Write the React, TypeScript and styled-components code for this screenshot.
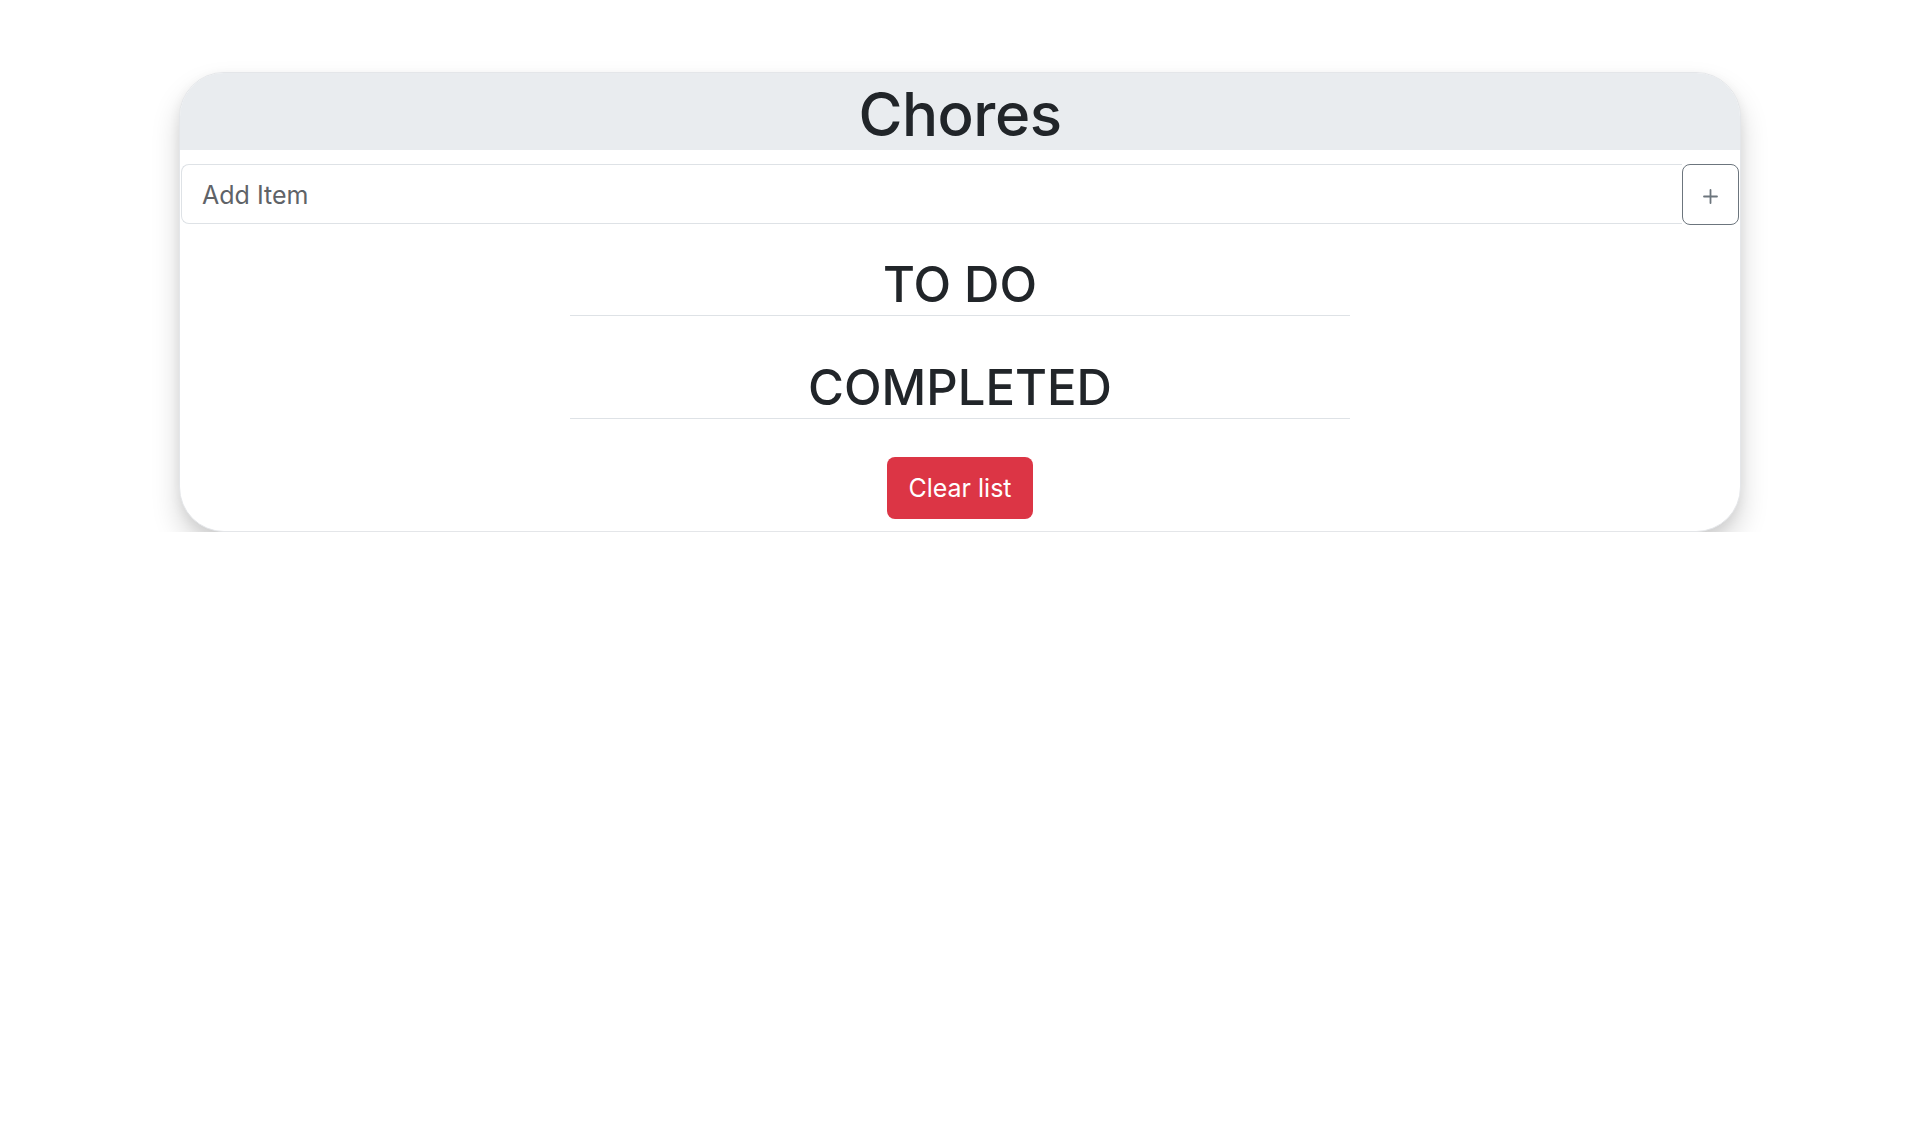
import React from "react";
import styled, { createGlobalStyle } from "styled-components";

const GlobalStyle = createGlobalStyle`
  html, body {
    margin: 0;
    padding: 0;
    background: #ffffff;
    font-family: Inter, "Liberation Sans", Arial, sans-serif;
    color: #212529;
  }
  * { box-sizing: border-box; }
`;

const Page = styled.main`
  padding-top: 72px;
  display: flex;
  justify-content: center;
`;

const Card = styled.section`
  width: 1562px;
  background: #ffffff;
  border: 1px solid #e4e6e9;
  border-radius: 45px;
  overflow: hidden;
  box-shadow: 0 16px 28px rgba(0, 0, 0, 0.17), 0 4px 12px rgba(0, 0, 0, 0.06);
  display: flex;
  flex-direction: column;
  align-items: center;
  padding-bottom: 12px;
`;

const Header = styled.header`
  align-self: stretch;
  height: 77px;
  background: #e9ecef;
  display: flex;
  justify-content: center;
  padding-top: 5px;
`;

const Title = styled.h1`
  margin: 0;
  font-size: 60px;
  font-weight: 500;
  letter-spacing: -0.5px;
  line-height: 73px;
  color: #212529;
`;

const InputRow = styled.form`
  align-self: stretch;
  display: flex;
  margin: 14px 1px 0;
  height: 61px;
`;

const ItemInput = styled.input`
  flex: 1;
  min-width: 0;
  height: 60px;
  border: 1px solid #dee2e6;
  border-right: none;
  border-radius: 8px 0 0 8px;
  padding: 2px 20px 0;
  font-family: Inter, "Liberation Sans", Arial, sans-serif;
  font-size: 25px;
  color: #212529;
  outline: none;
  &::placeholder {
    color: #5f6368;
  }
`;

const AddButton = styled.button`
  width: 57px;
  height: 61px;
  border: 1px solid #6c757d;
  border-radius: 8px;
  background: #ffffff;
  display: flex;
  align-items: center;
  justify-content: center;
  padding: 4px 0 0;
  cursor: pointer;
`;

const Section = styled.div<{ $gap: number }>`
  width: 50%;
  margin-top: ${(p) => p.$gap}px;
  border-bottom: 1px solid #dee2e6;
  text-align: center;
`;

const SectionTitle = styled.h2`
  margin: 0;
  font-size: 49px;
  font-weight: 500;
  line-height: 61px;
  color: #212529;
`;

const ClearButton = styled.button`
  margin-top: 38px;
  height: 62px;
  padding: 0 21px;
  border: none;
  border-radius: 8px;
  background: #dc3545;
  color: #ffffff;
  font-family: Inter, "Liberation Sans", Arial, sans-serif;
  font-size: 25px;
  cursor: pointer;
`;

const PlusIcon = () => (
  <svg width="15" height="15" viewBox="0 0 15 15" aria-hidden="true">
    <path d="M7.5 1v13M1 7.5h13" stroke="#6c757d" strokeWidth="1.8" strokeLinecap="round" />
  </svg>
);

export default function App() {
  return (
    <>
      <GlobalStyle />
      <Page>
        <Card>
          <Header>
            <Title>Chores</Title>
          </Header>
          <InputRow onSubmit={(e) => e.preventDefault()}>
            <ItemInput placeholder="Add Item" />
            <AddButton type="submit" aria-label="Add">
              <PlusIcon />
            </AddButton>
          </InputRow>
          <Section $gap={29}>
            <SectionTitle>TO DO</SectionTitle>
          </Section>
          <Section $gap={41}>
            <SectionTitle>COMPLETED</SectionTitle>
          </Section>
          <ClearButton type="button">Clear list</ClearButton>
        </Card>
      </Page>
    </>
  );
}
